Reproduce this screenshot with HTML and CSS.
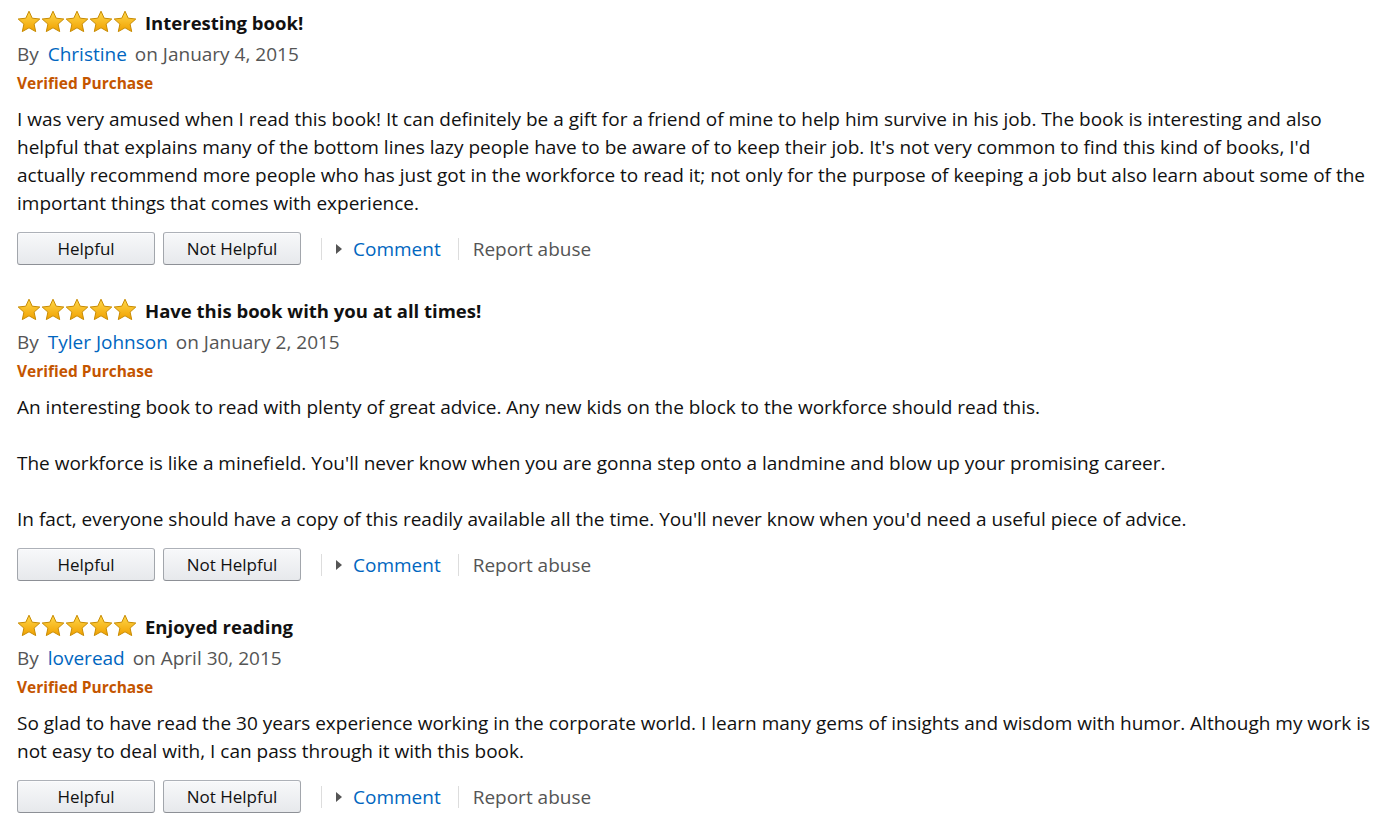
FILE: index.html
```html
<!DOCTYPE html>
<html>
<head>
<meta charset="utf-8">
<link rel="stylesheet" href="styles.css">
</head>
<body>
<div class="reviews">
  <div class="review">
    <div class="title-row">
      <span class="stars"></span>
      <span class="title">Interesting book!</span>
    </div>
    <div class="byline">By <a class="author" href="#">Christine</a> on January 4, 2015</div>
    <div class="verified">Verified Purchase</div>
    <div class="body">I was very amused when I read this book! It can definitely be a gift for a friend of mine to help him survive in his job. The book is interesting and also helpful that explains many of the bottom lines lazy people have to be aware of to keep their job. It's not very common to find this kind of books, I'd actually recommend more people who has just got in the workforce to read it; not only for the purpose of keeping a job but also learn about some of the important things that comes with experience.</div>
    <div class="actions">
      <button class="btn">Helpful</button>
      <button class="btn">Not Helpful</button>
      <span class="sep"></span>
      <span class="tri"></span>
      <a class="comment" href="#">Comment</a>
      <span class="sep"></span>
      <span class="report">Report abuse</span>
    </div>
  </div>
  <div class="review">
    <div class="title-row">
      <span class="stars"></span>
      <span class="title">Have this book with you at all times!</span>
    </div>
    <div class="byline">By <a class="author" href="#">Tyler Johnson</a> on January 2, 2015</div>
    <div class="verified">Verified Purchase</div>
    <div class="body">An interesting book to read with plenty of great advice. Any new kids on the block to the workforce should read this.<br><br>The workforce is like a minefield. You'll never know when you are gonna step onto a landmine and blow up your promising career.<br><br>In fact, everyone should have a copy of this readily available all the time. You'll never know when you'd need a useful piece of advice.</div>
    <div class="actions">
      <button class="btn">Helpful</button>
      <button class="btn">Not Helpful</button>
      <span class="sep"></span>
      <span class="tri"></span>
      <a class="comment" href="#">Comment</a>
      <span class="sep"></span>
      <span class="report">Report abuse</span>
    </div>
  </div>
  <div class="review">
    <div class="title-row">
      <span class="stars"></span>
      <span class="title">Enjoyed reading</span>
    </div>
    <div class="byline">By <a class="author" href="#">loveread</a> on April 30, 2015</div>
    <div class="verified">Verified Purchase</div>
    <div class="body">So glad to have read the 30 years experience working in the corporate world. I learn many gems of insights and wisdom with humor. Although my work is not easy to deal with, I can pass through it with this book.</div>
    <div class="actions">
      <button class="btn">Helpful</button>
      <button class="btn">Not Helpful</button>
      <span class="sep"></span>
      <span class="tri"></span>
      <a class="comment" href="#">Comment</a>
      <span class="sep"></span>
      <span class="report">Report abuse</span>
    </div>
  </div>
</div>
</body>
</html>
```
FILE: styles.css
```css
html, body {
  margin: 0;
  padding: 0;
  background: #fff;
}
body {
  font-family: "Open Sans", "Liberation Sans", sans-serif;
  color: #111;
}
.reviews {
  padding: 10px 0 0 17px;
  width: 1358px;
}
.review {
  margin-bottom: 33px;
}
.title-row {
  display: flex;
  align-items: center;
  height: 24px;
}
.stars {
  display: inline-block;
  width: 120px;
  height: 24px;
  background-image: url("data:image/svg+xml,%3Csvg xmlns='http://www.w3.org/2000/svg' width='24' height='24' viewBox='0 0 24 24'%3E%3Cdefs%3E%3ClinearGradient id='g' x1='0' y1='0' x2='0' y2='1'%3E%3Cstop offset='0' stop-color='%23ffd84a'/%3E%3Cstop offset='1' stop-color='%23f0a000'/%3E%3C/linearGradient%3E%3C/defs%3E%3Cpath d='M12 1.2l3.2 7 7.6.8-5.7 5.1 1.6 7.5L12 17.8l-6.7 3.8 1.6-7.5L1.2 9l7.6-.8z' fill='url(%23g)' stroke='%23c78a00' stroke-width='1' stroke-linejoin='round'/%3E%3C/svg%3E");
  background-repeat: repeat-x;
  background-size: 24px 24px;
}
.title {
  font-weight: 700;
  font-size: 18.5px;
  margin-left: 8px;
}
.byline {
  font-size: 19px;
  color: #555;
  margin-top: 7px;
  line-height: 26px;
}
.author {
  color: #0066c0;
  text-decoration: none;
  margin: 0 3px 0 4px;
}
.verified {
  color: #c45500;
  font-weight: 700;
  font-size: 15.5px;
  line-height: 22px;
  margin-top: 5px;
}
.body {
  font-size: 19px;
  line-height: 28px;
  margin-top: 11px;
}
.actions {
  display: flex;
  align-items: center;
  margin-top: 15px;
  height: 33px;
}
.btn {
  width: 138px;
  height: 33px;
  margin-right: 8px;
  border: 1px solid;
  border-color: #adb1b8 #a2a6ac #8d9096;
  border-radius: 3px;
  background: linear-gradient(#f7f8fa, #e7e9ec);
  box-shadow: 0 1px 0 rgba(255,255,255,.6) inset;
  font-family: "Open Sans", "Liberation Sans", sans-serif;
  font-size: 17px;
  color: #111;
  padding: 0;
}
.sep {
  width: 1px;
  height: 22px;
  background: #ddd;
  margin: 0 14px 0 12px;
}
.tri {
  width: 0;
  height: 0;
  border-left: 6px solid #555;
  border-top: 5px solid transparent;
  border-bottom: 5px solid transparent;
  margin: 0 11px 0 0;
}
.comment {
  color: #0066c0;
  text-decoration: none;
  font-size: 19px;
  margin-right: 5px;
}
.report {
  color: #555;
  font-size: 19px;
}
```
